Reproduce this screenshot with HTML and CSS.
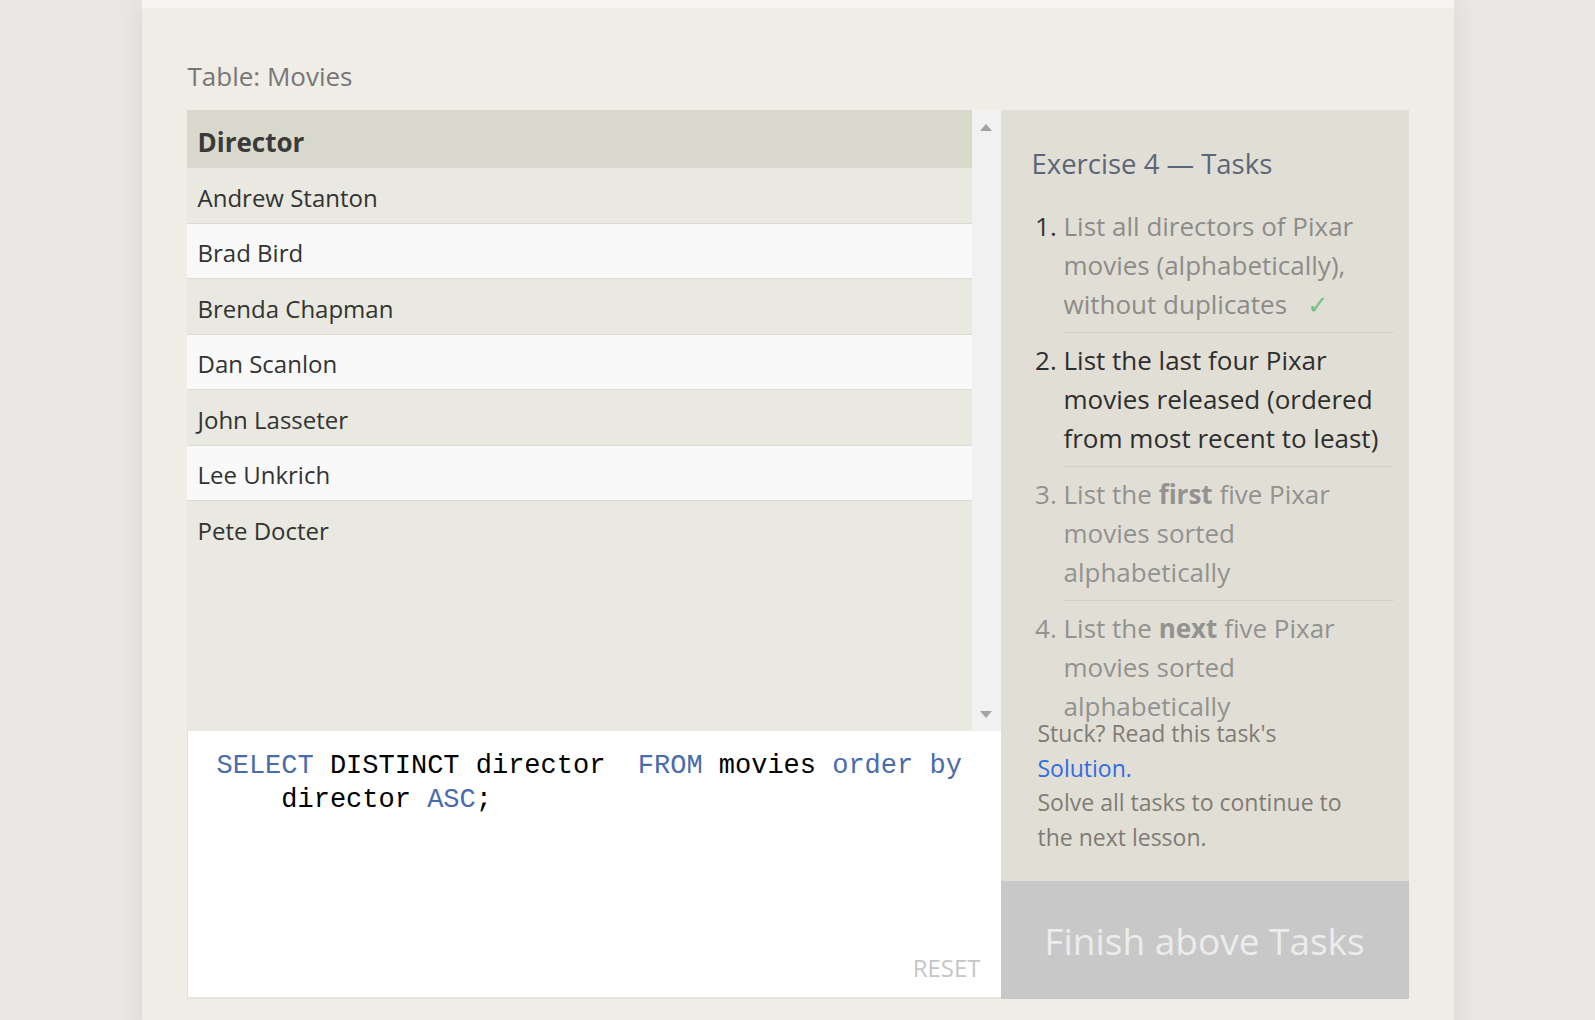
FILE: index.html
```html
<!DOCTYPE html>
<html lang="en">
<head>
<meta charset="utf-8">
<title>SQL Lesson — Exercise 4</title>
<link rel="stylesheet" href="styles.css">
</head>
<body>
<div class="page">
  <div class="top-strip"></div>
  <div class="panel">
    <div class="table-label">Table: Movies</div>
    <div class="workspace">
      <div class="left-col">
        <div class="table-wrap">
          <div class="table-scroll">
            <div class="th">Director</div>
            <div class="row odd">Andrew Stanton</div>
            <div class="row even">Brad Bird</div>
            <div class="row odd">Brenda Chapman</div>
            <div class="row even">Dan Scanlon</div>
            <div class="row odd">John Lasseter</div>
            <div class="row even">Lee Unkrich</div>
            <div class="row odd last">Pete Docter</div>
          </div>
          <div class="scrollbar">
            <span class="arrow up"></span>
            <span class="arrow down"></span>
          </div>
        </div>
        <div class="editor">
          <div class="code">
            <div class="code-line"><span class="kw">SELECT</span> DISTINCT director  <span class="kw">FROM</span> movies <span class="kw">order by</span></div>
            <div class="code-line wrapped">director <span class="kw">ASC</span>;</div>
          </div>
          <div class="reset">RESET</div>
        </div>
      </div>
      <div class="right-col">
        <div class="tasks">
          <div class="tasks-title">Exercise 4 — Tasks</div>
          <ol class="task-list">
            <li class="done"><span class="done-text">List all directors of Pixar movies (alphabetically), without duplicates</span><span class="check">✓</span></li>
            <li class="active">List the last four Pixar movies released (ordered from most recent to least)</li>
            <li class="todo">List the <b>first</b> five Pixar movies sorted alphabetically</li>
            <li class="todo">List the <b>next</b> five Pixar movies sorted alphabetically</li>
          </ol>
          <div class="stuck">Stuck? Read this task's <a class="solution" href="#">Solution.</a><br>Solve all tasks to continue to the next lesson.</div>
        </div>
        <div class="finish">Finish above Tasks</div>
      </div>
    </div>
  </div>
</div>
</body>
</html>
```
FILE: styles.css
```css
html, body {
  margin: 0;
  padding: 0;
}
body {
  background: #ebe7e4;
  font-family: "Open Sans", "Noto Sans", sans-serif;
  color: #333;
  height: 1020px;
  overflow: hidden;
}
.page {
  width: 1312px;
  margin: 0 auto;
  box-shadow: 0 0 26px rgba(60, 40, 30, 0.09);
  background: #f5f4f0;
}
.top-strip {
  height: 8px;
  background: #f6f5f1;
}
.panel {
  background: #efede6;
  border-radius: 4px 4px 0 0;
  padding: 51px 45px 40px;
}
.table-label {
  font-size: 26px;
  line-height: 34px;
  color: #777;
  margin-bottom: 17px;
  margin-left: 1px;
}
.workspace {
  display: grid;
  grid-template-columns: 814px 408px;
}
.left-col {
  display: flex;
  flex-direction: column;
}
.table-wrap {
  height: 621px;
  display: grid;
  grid-template-columns: 1fr 29px;
  background: #e9e8e1;
}
.table-scroll {
  display: flex;
  flex-direction: column;
}
.th {
  background: #d9d8cc;
  font-weight: 700;
  font-size: 26px;
  line-height: 36px;
  padding: 14px 11px 8px;
  color: #3a3a3a;
}
.row {
  font-size: 24px;
  line-height: 36px;
  padding: 11.5px 11px 7px;
  border-bottom: 1px solid #dcdbd4;
  color: #333;
}
.row.last {
  border-bottom: none;
}
.odd {
  background: #e9e8e1;
}
.even {
  background: #f9f9f9;
}
.scrollbar {
  background: #f1f1f1;
  display: flex;
  flex-direction: column;
  align-items: center;
  justify-content: space-between;
  padding: 14px 0 13px;
}
.arrow {
  width: 0;
  height: 0;
  border-left: 6.5px solid transparent;
  border-right: 6.5px solid transparent;
}
.arrow.up {
  border-bottom: 7px solid #a3a3a3;
}
.arrow.down {
  border-top: 7px solid #a3a3a3;
}
.editor {
  height: 268px;
  box-sizing: border-box;
  background: #fff;
  border-left: 1px solid #e2e1d9;
  border-bottom: 2px solid #e6e5dd;
  display: flex;
  flex-direction: column;
  padding: 18px 20px 13px 29px;
}
.code {
  font-family: "Liberation Mono", "DejaVu Sans Mono", monospace;
  font-size: 27px;
  line-height: 34px;
  color: #000;
}
.code-line {
  white-space: pre;
}
.code-line.wrapped {
  padding-left: 4ch;
}
.kw {
  color: #4a6bad;
}
.reset {
  margin-top: auto;
  align-self: flex-end;
  font-size: 24px;
  line-height: 32px;
  color: #c6c6c6;
}
.right-col {
  display: flex;
  flex-direction: column;
}
.tasks {
  flex: 1;
  background: #e1dfd5;
  padding: 36px 15px 0 31px;
}
.tasks-title {
  font-size: 27.5px;
  line-height: 35px;
  color: #5b6678;
}
.task-list {
  margin: 18px 0 0;
  padding: 0 0 0 32px;
  height: 517px;
  font-size: 26px;
  line-height: 39px;
}
.task-list li {
  padding: 8px 0;
  border-bottom: 1px solid #d4d2c7;
}
.task-list li:last-child {
  border-bottom: none;
}
.task-list li.done {
  color: #333;
}
.done-text {
  color: #8c8c8a;
}
.check {
  color: #72c47e;
  margin-left: 20px;
}
.task-list li.active {
  color: #2e2e2e;
}
.task-list li.todo {
  color: #929290;
}
.task-list b {
  font-weight: 700;
}
.stuck {
  width: 320px;
  margin-left: 6px;
  font-size: 23px;
  line-height: 34.5px;
  color: #7f7b76;
}
.solution {
  color: #2f6de0;
  text-decoration: none;
}
.finish {
  height: 118px;
  background: #c8c8c8;
  color: #ececec;
  font-size: 37px;
  display: flex;
  align-items: center;
  justify-content: center;
}
```
